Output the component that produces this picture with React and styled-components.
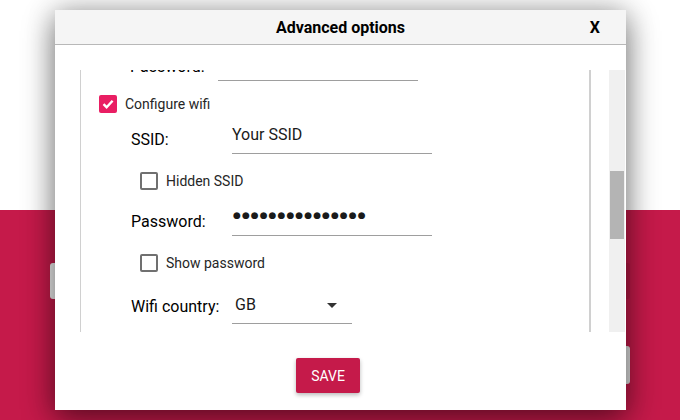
import React from 'react'
import styled, { createGlobalStyle } from 'styled-components'

const GlobalStyle = createGlobalStyle`
  * {
    box-sizing: border-box;
  }
  body {
    margin: 0;
    font-family: 'Roboto', 'Liberation Sans', sans-serif;
  }
`

const Page = styled.div`
  position: relative;
  width: 680px;
  height: 420px;
  overflow: hidden;
  display: flex;
  flex-direction: column;
`

const TopBand = styled.div`
  height: 210px;
  background: #ffffff;
`

const BottomBand = styled.div`
  flex: 1;
  background: #c51a4a;
  padding: 53px 50px 0;
  display: flex;
  flex-direction: column;
  gap: 47px;
`

const BgRow = styled.div`
  display: flex;
  justify-content: ${(p) => p.$justify || 'space-between'};
`

const BgButton = styled.div`
  width: 150px;
  height: ${(p) => p.$h || 36}px;
  border-radius: 3px;
  background: ${(p) => p.$bg || '#f2f2f2'};
`

const Dialog = styled.div`
  position: absolute;
  left: 55px;
  top: 10px;
  width: 571px;
  height: 400px;
  background: #ffffff;
  display: flex;
  flex-direction: column;
  box-shadow: 0 10px 30px rgba(0, 0, 0, 0.45), 0 0 26px rgba(0, 0, 0, 0.22);
`

const Header = styled.div`
  height: 35px;
  background: #f5f5f5;
  border-bottom: 1px solid #b8b8b8;
  display: grid;
  grid-template-columns: 1fr auto 1fr;
  align-items: center;
  font-size: 16px;
  font-weight: 700;
  color: #000;
`

const Title = styled.div`
  grid-column: 2;
  padding-top: 1px;
`

const Close = styled.div`
  justify-self: end;
  padding-right: 26px;
  padding-top: 1px;
`

const Body = styled.div`
  flex: 1;
  display: flex;
  flex-direction: column;
  padding-top: 25px;
`

const ScrollRow = styled.div`
  height: 262px;
  margin: 0 1px 0 25px;
  display: flex;
  gap: 18px;
`

const Frame = styled.div`
  width: 511px;
  border-left: 1px solid #d0d0d0;
  border-right: 2px solid #d0d0d0;
  overflow: hidden;
`

const Content = styled.div`
  margin-top: -30px;
  display: flex;
  flex-direction: column;
`

const Track = styled.div`
  width: 16px;
  background: #f0f0f0;
  padding: 101px 1px 0;
`

const Thumb = styled.div`
  height: 68px;
  background: #b4b4b4;
`

const FieldRow = styled.div`
  display: flex;
  align-items: flex-end;
  height: 40px;
  margin-top: ${(p) => p.$gap || 0}px;
  padding-left: ${(p) => p.$indent}px;
`

const Label = styled.div`
  width: ${(p) => p.$w}px;
  font-size: 16px;
  line-height: 20px;
  color: #000;
  margin-bottom: ${(p) => p.$drop || 4}px;
`

const TextInput = styled.div`
  width: ${(p) => p.$w}px;
  height: 40px;
  border-bottom: 1px solid #9e9e9e;
  display: flex;
  align-items: flex-end;
  padding-bottom: 8px;
  font-size: 16px;
  line-height: 20px;
  color: #1a1a1a;
`

const Dots = styled.span`
  font-family: 'DejaVu Sans', sans-serif;
  font-size: 9px;
  line-height: 10px;
  letter-spacing: 1.05px;
  color: #1a1a1a;
  margin: 0 0 7px 1px;
`

const Combo = styled.div`
  width: 120px;
  height: 40px;
  border-bottom: 1px solid #9e9e9e;
  display: flex;
  align-items: flex-end;
  justify-content: space-between;
  padding: 0 15px 8px 3px;
  font-size: 16px;
  line-height: 20px;
  color: #1a1a1a;
`

const Arrow = styled.svg`
  margin-bottom: 7px;
`

const CheckRow = styled.div`
  display: flex;
  align-items: center;
  gap: 8px;
  height: 18px;
  margin-top: ${(p) => p.$gap}px;
  padding-left: ${(p) => p.$indent}px;
  font-size: 14px;
  color: #262626;
`

const Box = styled.div`
  width: 18px;
  height: 18px;
  border-radius: 2px;
  display: flex;
  align-items: center;
  justify-content: center;
  background: ${(p) => (p.$checked ? '#e91e63' : 'transparent')};
  border: ${(p) => (p.$checked ? 'none' : '2px solid #707070')};
`

const Footer = styled.div`
  flex: 1;
  padding: 26px 0 0 241px;
`

const SaveButton = styled.button`
  width: 64px;
  height: 35px;
  border: none;
  border-radius: 2px;
  background: #c51a4a;
  color: #ffffff;
  font-family: 'Roboto', 'Liberation Sans', sans-serif;
  font-size: 14px;
  box-shadow: 0 2px 4px rgba(0, 0, 0, 0.28);
  padding: 0;
`

function Checkbox({ checked, label, indent, gap }) {
  return (
    <CheckRow $indent={indent} $gap={gap}>
      <Box $checked={checked}>
        {checked && (
          <svg width="12" height="10" viewBox="0 0 12 10">
            <path
              d="M1.5 5.2 L4.6 8.2 L10.6 1.8"
              fill="none"
              stroke="#fff"
              strokeWidth="2.4"
            />
          </svg>
        )}
      </Box>
      <span>{label}</span>
    </CheckRow>
  )
}

export default function App() {
  return (
    <>
      <GlobalStyle />
      <Page>
        <TopBand />
        <BottomBand>
          <BgRow>
            <BgButton />
            <BgButton $bg="#b81845" />
          </BgRow>
          <BgRow $justify="flex-end">
            <BgButton $h={38} $bg="#e4e4e4" />
          </BgRow>
        </BottomBand>

        <Dialog>
          <Header>
            <Title>Advanced options</Title>
            <Close>X</Close>
          </Header>
          <Body>
            <ScrollRow>
              <Frame>
                <Content>
                  <FieldRow $indent={49} $gap={1}>
                    <Label $w={88}>Password:</Label>
                    <TextInput $w={200} />
                  </FieldRow>
                  <Checkbox checked label="Configure wifi" indent={18} gap={14} />
                  <FieldRow $indent={50} $gap={1}>
                    <Label $w={101}>SSID:</Label>
                    <TextInput $w={200}>Your SSID</TextInput>
                  </FieldRow>
                  <Checkbox label="Hidden SSID" indent={59} gap={18} />
                  <FieldRow $indent={50} $gap={6}>
                    <Label $w={101}>Password:</Label>
                    <TextInput $w={200}>
                      <Dots>●●●●●●●●●●●●●●●</Dots>
                    </TextInput>
                  </FieldRow>
                  <Checkbox label="Show password" indent={59} gap={18} />
                  <FieldRow $indent={50} $gap={12}>
                    <Label $w={101} $drop={7}>Wifi country:</Label>
                    <Combo>
                      <span>GB</span>
                      <Arrow width="10" height="5" viewBox="0 0 10 5">
                        <path d="M0 0 L10 0 L5 5 Z" fill="#333" />
                      </Arrow>
                    </Combo>
                  </FieldRow>
                </Content>
              </Frame>
              <Track>
                <Thumb />
              </Track>
            </ScrollRow>
            <Footer>
              <SaveButton>SAVE</SaveButton>
            </Footer>
          </Body>
        </Dialog>
      </Page>
    </>
  )
}
